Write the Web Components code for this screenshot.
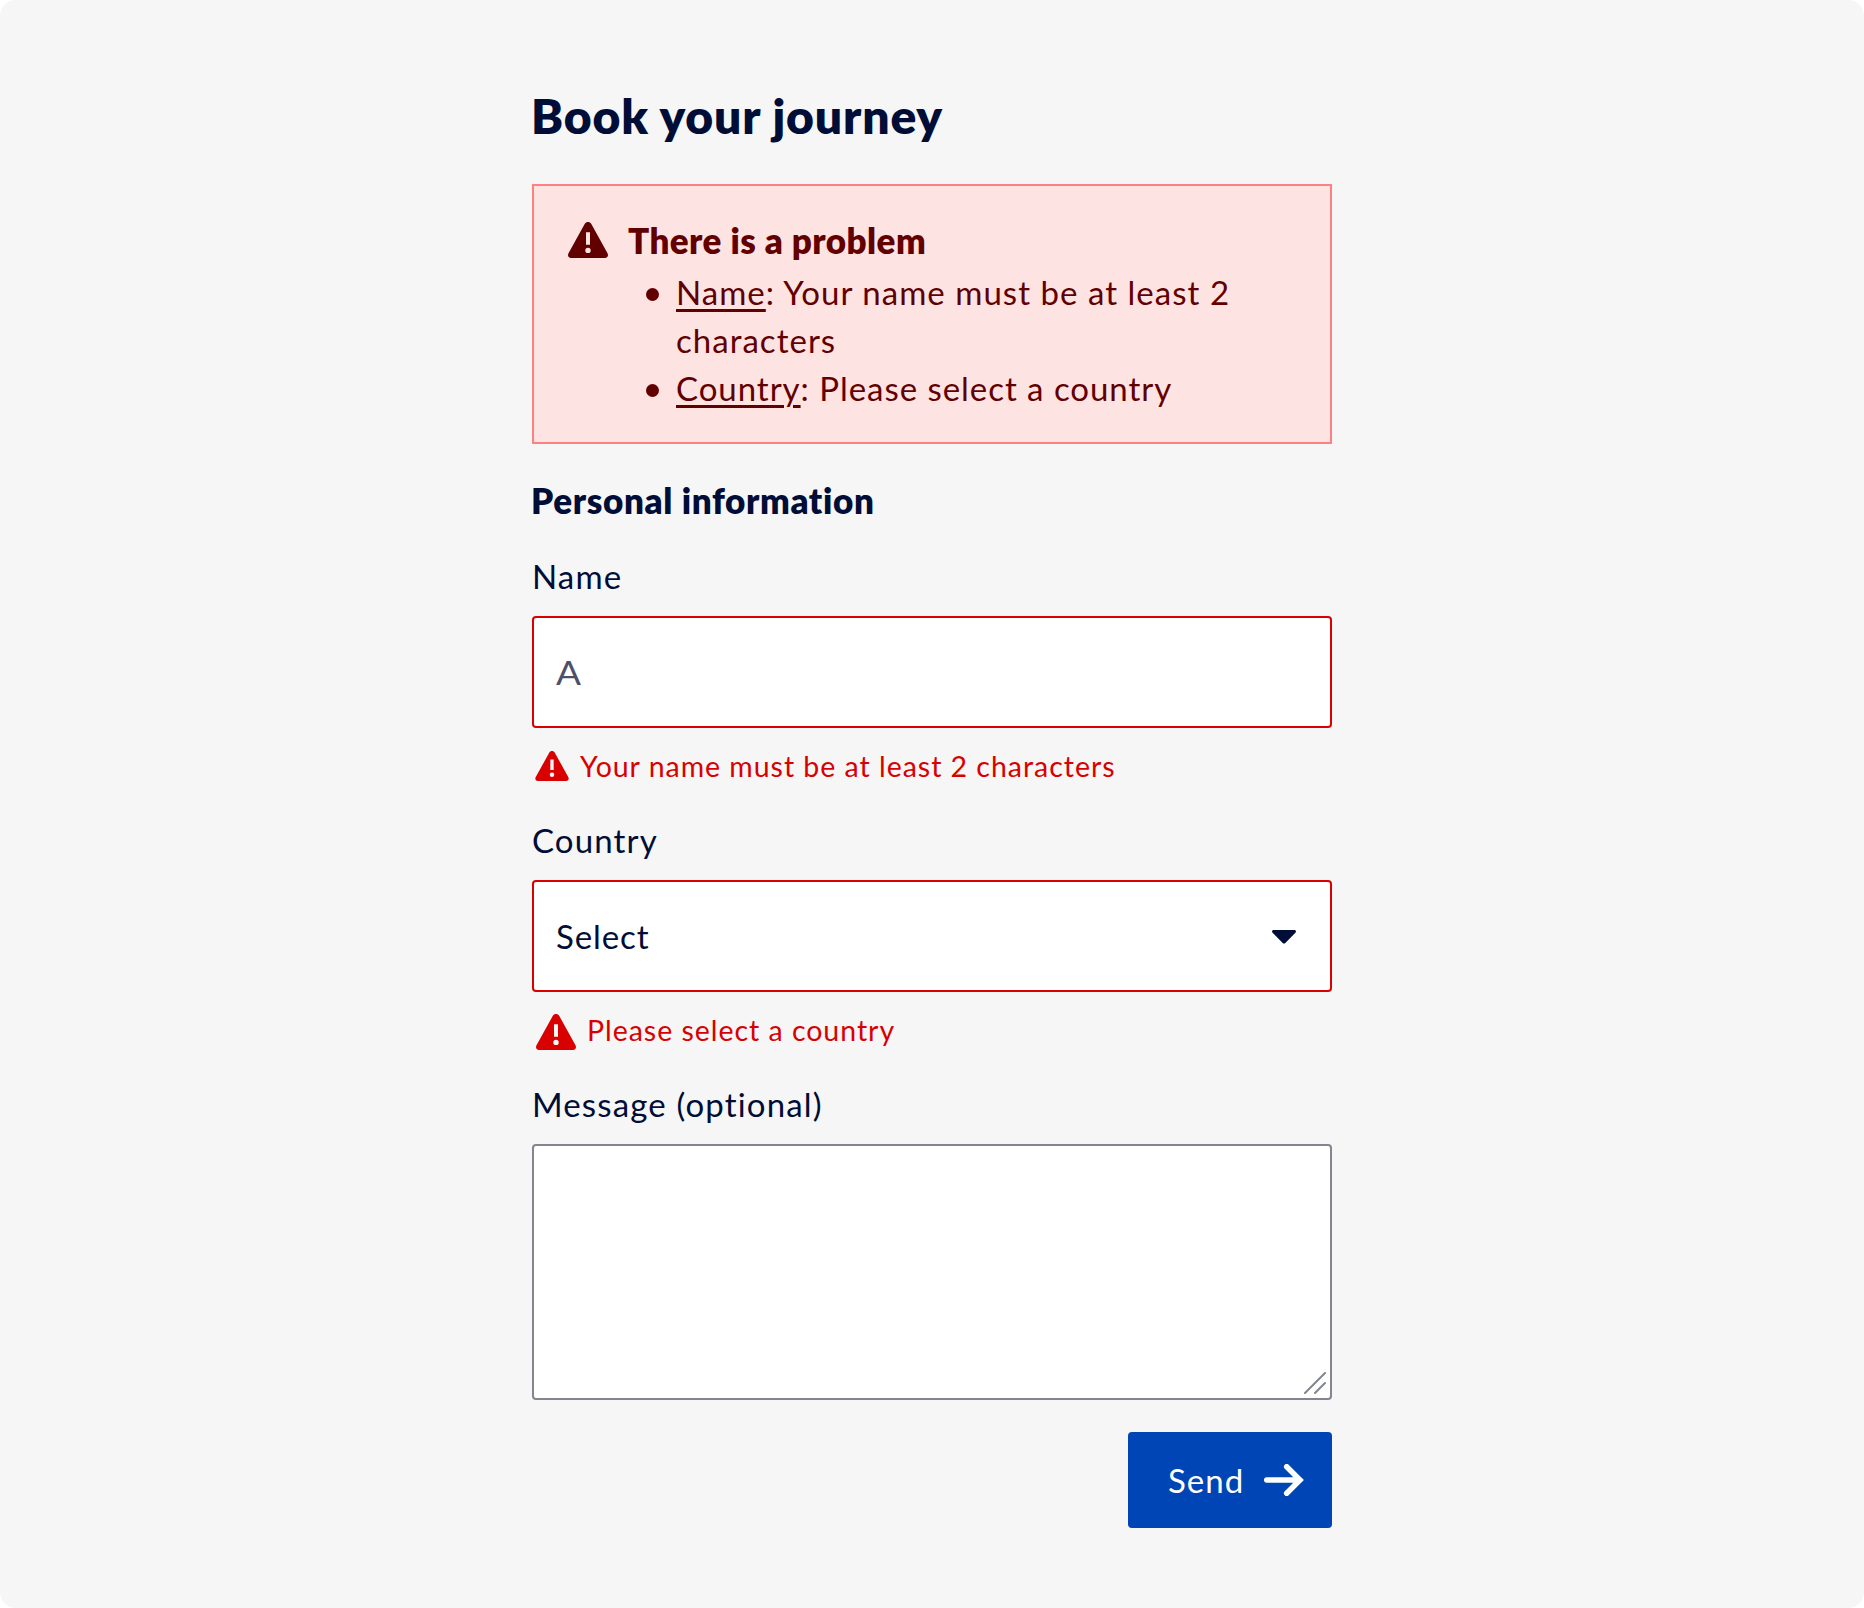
<!DOCTYPE html>
<html lang="en">
<head>
<meta charset="utf-8">
<title>Book your journey</title>
<style>
html,body{margin:0;background:#fff;font-family:Lato,"Open Sans",sans-serif}
</style>
</head>
<body>
<journey-page>
  <error-summary>
    <summary-item field="Name">Your name must be at least 2 characters</summary-item>
    <summary-item field="Country">Please select a country</summary-item>
  </error-summary>
  <section-title>Personal information</section-title>
  <form-field kind="text" label="Name" value="A" error="Your name must be at least 2 characters"></form-field>
  <form-field kind="select" label="Country" value="Select" error="Please select a country"></form-field>
  <form-field kind="area" label="Message (optional)"></form-field>
  <send-button>Send</send-button>
</journey-page>
<script>
const define = (name, html) => customElements.define(name, class extends HTMLElement {
  connectedCallback() {
    if (this.shadowRoot) return;
    this.attachShadow({mode: 'open'}).innerHTML = html(this);
  }
});

define('journey-page', () => `
<style>
:host{display:block;box-sizing:border-box;width:1864px;height:1608px;background:#f6f6f6;border-radius:16px;padding-top:88px;color:#000d36}
main{width:800px;margin:0 auto;display:flex;flex-direction:column}
h1{margin:0 0 40px -1px;font-size:48px;line-height:56px;font-weight:800;letter-spacing:.85px}
</style>
<main><h1>Book your journey</h1><slot></slot></main>`);

define('warning-icon', () => `
<style>:host{display:block;width:40px;height:36px;flex:none}svg{display:block;width:100%;height:100%}</style>
<svg viewBox="0 0 40 36"><path fill="currentColor" fill-rule="evenodd" d="M16.8 1.8C18.2-.6 21.8-.6 23.2 1.8L39.5 31.2C40.7 33.500 39.6 36 37 36H3C.4 36-.7 33.500.5 31.200ZM18 10.300V22.700H22V10.300ZM20 25.700A2.700 2.700 0 1 0 20 31.100 2.700 2.700 0 1 0 20 25.700Z"/></svg>`);

define('error-summary', () => `
<style>
:host{display:flex;box-sizing:border-box;height:260px;border:2px solid #ff8080;background:#fee3e3;color:#620000;padding:32px 34px;gap:20px}
warning-icon{margin-top:4px}
h2{margin:0 0 6px;font-size:35px;line-height:44px;font-weight:800;letter-spacing:.43px}
ul{margin:0;padding:0;list-style:none}
</style>
<warning-icon></warning-icon><div><h2>There is a problem</h2><ul><slot></slot></ul></div>`);

define('summary-item', el => `
<style>
:host{display:flex;font-size:33px;line-height:48px;padding-left:18px;width:640px;letter-spacing:1.03px}
:host([field=Country]){letter-spacing:.96px}
i{flex:none;width:13px;height:13px;border-radius:50%;background:currentColor;margin:20px 17px 0 0}
a{text-decoration:underline;text-decoration-thickness:2.500px;text-underline-offset:4px}
</style>
<i></i><span><a>${el.getAttribute('field')}</a>: <slot></slot></span>`);

define('section-title', () => `
<style>:host{display:block;margin:34px 0 34px -1px;font-size:35px;line-height:44px;font-weight:800;letter-spacing:.64px}</style><slot></slot>`);

define('form-field', el => {
  const kind = el.getAttribute('kind'), err = el.getAttribute('error'), value = el.getAttribute('value') || '';
  return `
<style>
:host{display:block;margin-bottom:36px}
:host([kind=area]){margin-bottom:32px}
.label{font-size:33px;line-height:40px;margin-bottom:20px;letter-spacing:1.15px}
.box{box-sizing:border-box;height:112px;border:2px solid #d90000;border-radius:4px;background:#fff;display:flex;align-items:center;justify-content:space-between;padding:0 34px 0 22px;font-size:33px;letter-spacing:.9px}
.text{color:#4d5168}
.text span{transform:scaleX(1.12);transform-origin:left}
.select svg{margin-top:1px}
.area{height:256px;border-color:#84868f;align-items:flex-end;justify-content:flex-end;padding:0 4px 4px 0}
.error{display:flex;align-items:center;height:40px;margin-top:16px;padding-left:4px;gap:11px;color:#d90000;font-size:28.5px;letter-spacing:.97px}
.error span{margin-top:3px}
warning-icon{margin-top:8px}
.small{width:34px;height:30px;margin:4px 0 0 -1px}
svg{display:block}
</style>
<div class="label">${el.getAttribute('label')}</div>
<div class="box ${kind}"><span>${value}</span>${kind === 'select' ? '<svg width="24" height="14" viewBox="0 0 24 14"><path fill="currentColor" d="M1.600 0H22.400C24 0 24.400 1.800 23.400 2.800L13.300 12.900C12.600 13.600 11.400 13.600 10.700 12.900L.6 2.800C-.4 1.800 0 0 1.600 0Z"/></svg>' : ''}${kind === 'area' ? '<svg width="22" height="22" viewBox="0 0 22 22" stroke="#84868f" stroke-width="2" stroke-linecap="round"><path d="M1 21 21 1M11 21 21 11"/></svg>' : ''}</div>
${err ? `<div class="error"><warning-icon class="${kind === 'text' ? 'small' : ''}"></warning-icon><span>${err}</span></div>` : ''}`;
});

define('send-button', () => `
<style>
:host{align-self:flex-end;display:flex;align-items:center;box-sizing:border-box;width:204px;height:96px;border-radius:4px;background:#0045b5;color:#fff;padding:0 28px 0 40px;justify-content:space-between;font-size:33px;letter-spacing:1.05px}
svg{display:block}
</style>
<span><slot></slot></span><svg width="40" height="32" viewBox="0 0 40 32" fill="none" stroke="currentColor" stroke-width="5.500" stroke-linecap="round"><path d="M2.700 16H36M22.700 2.700 36 16 22.700 29.300"/></svg>`);
</script>
</body>
</html>
